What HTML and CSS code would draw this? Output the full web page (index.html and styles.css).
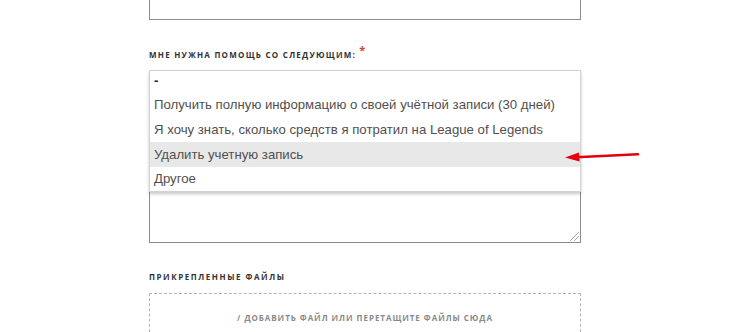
FILE: index.html
```html
<!DOCTYPE html>
<html lang="ru">
<head>
<meta charset="utf-8">
<link rel="stylesheet" href="styles.css">
</head>
<body>
<div class="form">
  <div class="top-box"></div>
  <div class="label">Мне нужна помощь со следующим:<span class="req">*</span></div>
  <div class="field">
    <div class="textarea"><span class="grip"></span></div>
    <ul class="menu">
      <li class="opt first">-</li>
      <li class="opt">Получить полную информацию о своей учётной записи (30 дней)</li>
      <li class="opt">Я хочу знать, сколько средств я потратил на League of Legends</li>
      <li class="opt active">Удалить учетную запись</li>
      <li class="opt">Другое</li>
    </ul>
    <svg class="arrow" width="80" height="14" viewBox="0 0 80 14">
      <path d="M12 8.2 L74 5.2" stroke="#e3000f" stroke-width="2.6" stroke-linecap="round" fill="none"/>
      <path d="M1 8.6 L15 3.6 L15.6 12.6 Z" fill="#e3000f"/>
    </svg>
  </div>
  <div class="label label-files">Прикрепленные файлы</div>
  <div class="drop">/ Добавить файл или перетащите файлы сюда</div>
</div>
</body>
</html>
```
FILE: styles.css
```css
html, body { margin: 0; padding: 0; background: #fff; }
html { overflow: hidden; }
body { width: 750px; height: 332px; overflow: hidden; }
.form {
  margin-left: 149px;
  width: 432px;
  display: flex;
  flex-direction: column;
}
.top-box {
  height: 19px;
  border: 1px solid #8c8c8c;
  border-top: 0;
}
.label {
  margin-top: 28px;
  height: 12px;
  font-family: "Open Sans", "Liberation Sans", sans-serif;
  font-weight: 700;
  font-size: 8px;
  letter-spacing: 1.25px;
  text-transform: uppercase;
  color: #333;
  line-height: 12px;
  position: relative;
}
.req {
  color: #d9442b;
  font-size: 11px;
  position: relative;
  top: -4px;
  left: 3px;
}
.field {
  margin-top: 10px;
  position: relative;
  height: 173px;
}
.textarea {
  position: absolute;
  left: 0; right: 0; top: 30px; bottom: 0;
  border: 1px solid #8a8a8a;
  box-sizing: border-box;
  background: #fff;
}
.grip {
  position: absolute;
  right: 1px; bottom: 1px;
  width: 9px; height: 9px;
  background: linear-gradient(135deg, transparent 45%, #aaa 45%, #aaa 52%, transparent 52%, transparent 70%, #aaa 70%, #aaa 77%, transparent 77%);
}
.menu {
  position: absolute;
  left: 0; right: 0; top: 0;
  margin: 0; padding: 0;
  list-style: none;
  background: #fff;
  border: 1px solid #d2d2d2;
  box-shadow: 0 2px 3px rgba(0,0,0,0.22);
  font-family: "Liberation Sans", Arial, sans-serif;
  font-size: 13.2px;
  color: #505050;
}
.opt {
  height: 25px;
  line-height: 25px;
  padding-left: 4px;
  white-space: nowrap;
}
.opt.first { height: 21px; line-height: 19px; font-weight: 700; color: #222; }
.opt.active { background: #e8e8e8; }
.opt:last-child { height: 24px; line-height: 24px; }
.arrow {
  position: absolute;
  left: 415px;
  top: 79px;
}
.label-files { margin-top: 28px; letter-spacing: 1.55px; }
.drop {
  margin-top: 10px;
  height: 39px;
  border: 1px dashed #b4b4b4;
  border-bottom: 0;
  box-sizing: border-box;
  padding-top: 18px;
  text-align: center;
  font-family: "Open Sans", "Liberation Sans", sans-serif;
  font-weight: 700;
  font-size: 8px;
  letter-spacing: 0.95px;
  text-transform: uppercase;
  color: #8a8a8a;
  line-height: 12px;
}
```
